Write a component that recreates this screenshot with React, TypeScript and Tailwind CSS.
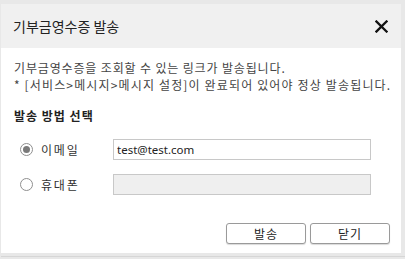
import { useState } from 'react';

function Radio({ checked }: { checked: boolean }) {
  return (
    <span className="flex h-[13px] w-[13px] items-center justify-center rounded-full border border-[#8f8f8f] bg-white">
      {checked && <span className="h-[7px] w-[7px] rounded-full bg-[#7a7a7a]"></span>}
    </span>
  );
}

export default function App() {
  const [method, setMethod] = useState<'email' | 'phone'>('email');

  return (
    <div
      className="h-[259px] w-[405px] overflow-hidden bg-[#e8e8e8] pt-[4px] pl-[1px]"
      style={{ fontFamily: '"Noto Sans CJK KR", "Noto Sans", sans-serif' }}
    >
      <div className="flex h-[249px] w-[400px] flex-col bg-white">
        <div className="flex h-[44px] items-center justify-between bg-[#f0f0f0] pl-[12px] pr-[13px]">
          <span className="text-[14px] text-[#222]">기부금영수증 발송</span>
          <svg width="13" height="13" viewBox="0 0 13 13">
            <path d="M1.5 1.5L11.5 11.5M11.5 1.5L1.5 11.5" stroke="#111" strokeWidth="2.3" strokeLinecap="square" />
          </svg>
        </div>

        <div className="flex flex-1 flex-col px-[13px] pt-[11px]">
          <p className="whitespace-nowrap text-[12px] leading-[17px] tracking-[0.85px] text-[#444]">
            기부금영수증을 조회할 수 있는 링크가 발송됩니다.
          </p>
          <p className="whitespace-nowrap text-[12px] leading-[17px] tracking-[1.15px] text-[#444]">
            * [서비스&gt;메시지&gt;메시지 설정]이 완료되어 있어야 정상 발송됩니다.
          </p>

          <h3 className="mt-[14px] text-[12px] font-bold leading-[17px] tracking-[1px] text-[#222]">발송 방법 선택</h3>

          <div className="mt-[15px] flex h-[21px] items-center">
            <label className="flex w-[99px] cursor-pointer items-center gap-[8px] pl-[6px]" onClick={() => setMethod('email')}>
              <Radio checked={method === 'email'} />
              <span className="text-[12px] tracking-[1.8px] text-[#333]">이메일</span>
            </label>
            <input
              defaultValue="test@test.com"
              className="h-[21px] w-[258px] border border-[#c8c8c8] bg-white px-[3px] text-[11.5px] text-[#222] outline-none"
              style={{ fontFamily: '"Noto Sans", sans-serif' }}
            />
          </div>

          <div className="mt-[14px] flex h-[21px] items-center">
            <label className="flex w-[99px] cursor-pointer items-center gap-[8px] pl-[6px]" onClick={() => setMethod('phone')}>
              <Radio checked={method === 'phone'} />
              <span className="text-[12px] tracking-[1.8px] text-[#333]">휴대폰</span>
            </label>
            <input disabled className="h-[21px] w-[258px] border border-[#c8c8c8] bg-[#efefef] px-[4px] text-[12px] outline-none" />
          </div>

          <div className="mt-[28px] mr-[-2px] flex justify-end gap-[4px]">
            <button className="h-[21px] w-[80px] rounded-[3px] border border-[#9a9a9a] bg-white text-[12px] tracking-[1px] text-[#222] shadow-[0_1px_1px_rgba(0,0,0,0.15)]">
              발송
            </button>
            <button className="h-[21px] w-[80px] rounded-[3px] border border-[#9a9a9a] bg-white text-[12px] tracking-[1px] text-[#222] shadow-[0_1px_1px_rgba(0,0,0,0.15)]">
              닫기
            </button>
          </div>
        </div>
      </div>
      <div className="mt-[3px] h-px w-full bg-[#d6d6d6]"></div>
    </div>
  );
}
